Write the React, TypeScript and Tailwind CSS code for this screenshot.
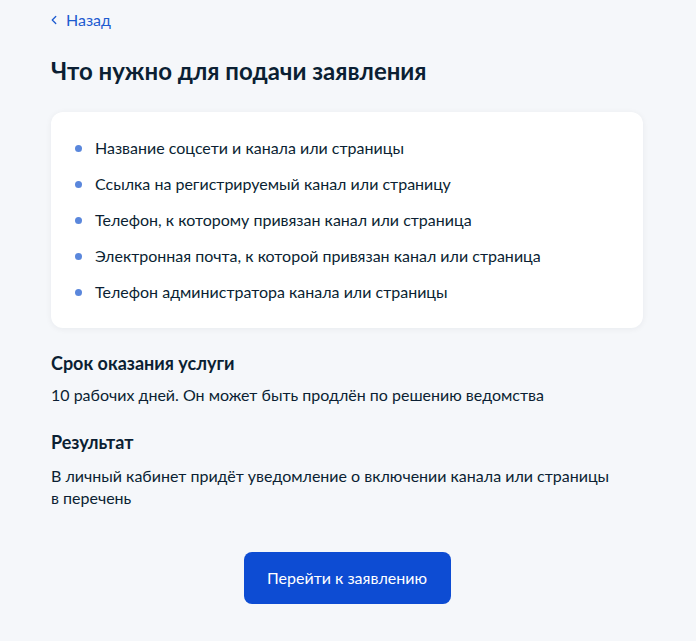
import { ChevronLeft } from 'lucide-react'

const requirements = [
  'Название соцсети и канала или страницы',
  'Ссылка на регистрируемый канал или страницу',
  'Телефон, к которому привязан канал или страница',
  'Электронная почта, к которой привязан канал или страница',
  'Телефон администратора канала или страницы',
]

export default function App() {
  return (
    <div className="min-h-[641px] bg-[#f5f7fa] text-[#0b1f33]" style={{ fontFamily: 'Lato, "Noto Sans", sans-serif' }}>
      <div className="ml-[51px] w-[592px] pt-[9px] pb-9">
        <a href="#" className="flex items-center gap-[5px] text-[16px] leading-[22px] text-[#1d5bd0]">
          <ChevronLeft size={14} strokeWidth={2.2} className="ml-[-4px]" />
          Назад
        </a>

        <h1 className="mt-[24px] text-[24px] leading-[32px] font-bold">Что нужно для подачи заявления</h1>

        <div className="mt-[25px] rounded-xl bg-white px-6 pt-[24px] pb-[24px] shadow-[0_1px_6px_rgba(11,31,51,0.06)]">
          <ul className="flex flex-col gap-[12px]">
            {requirements.map((item) => (
              <li key={item} className="flex items-center text-[16px] leading-[24px]">
                <span className="mr-[13px] h-[7px] w-[7px] shrink-0 rounded-full bg-[#5a87dc]" />
                {item}
              </li>
            ))}
          </ul>
        </div>

        <h2 className="mt-[22px] text-[18px] leading-[26px] font-bold">Срок оказания услуги</h2>
        <p className="mt-[7px] text-[16px] leading-[24px]">
          10 рабочих дней. Он может быть продлён по решению ведомства
        </p>

        <h2 className="mt-[22px] text-[18px] leading-[26px] font-bold">Результат</h2>
        <p className="mt-[10px] w-[570px] text-[16px] leading-[22px]">
          В личный кабинет придёт уведомление о включении канала или страницы в перечень
        </p>

        <div className="mt-[43px] flex justify-center">
          <button className="h-[52px] w-[207px] rounded-lg bg-[#0d4cd3] text-[16px] text-white">
            Перейти к заявлению
          </button>
        </div>
      </div>
    </div>
  )
}
